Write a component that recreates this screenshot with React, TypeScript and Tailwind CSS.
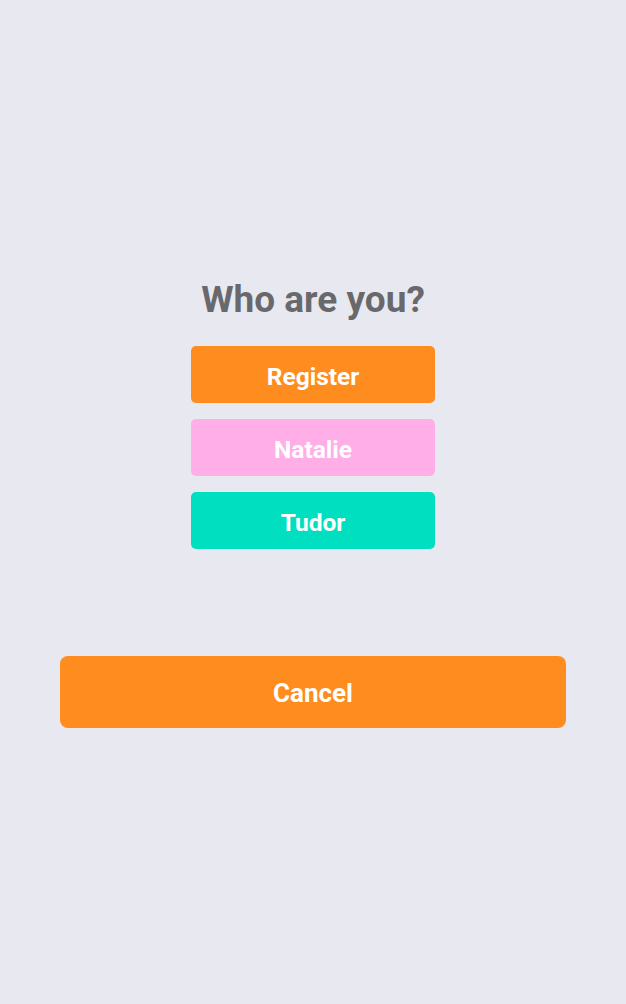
export default function App() {
  const font = { fontFamily: "Roboto, 'Noto Sans', sans-serif" };
  return (
    <div className="w-[626px] h-[1004px] bg-[#e8e9f0] flex flex-col items-center" style={font}>
      <h1 className="mt-[278px] h-[44px] leading-[44px] text-[37px] font-bold text-[#69696d]">Who are you?</h1>
      <div className="mt-[24px] flex flex-col gap-[16px]">
        <button className="w-[244px] h-[57px] pt-[5px] rounded-[5px] bg-[#ff8c1e] text-white font-bold text-[24.5px] leading-none">Register</button>
        <button className="w-[244px] h-[57px] pt-[5px] rounded-[5px] bg-[#ffaee8] text-white font-bold text-[24.5px] leading-none">Natalie</button>
        <button className="w-[244px] h-[57px] pt-[5px] rounded-[5px] bg-[#00e0c0] text-white font-bold text-[24.5px] leading-none">Tudor</button>
      </div>
      <button className="mt-[107px] w-[506px] h-[72px] pt-[2px] rounded-[8px] bg-[#ff8c1e] text-white font-bold text-[26px] leading-none">Cancel</button>
    </div>
  );
}
